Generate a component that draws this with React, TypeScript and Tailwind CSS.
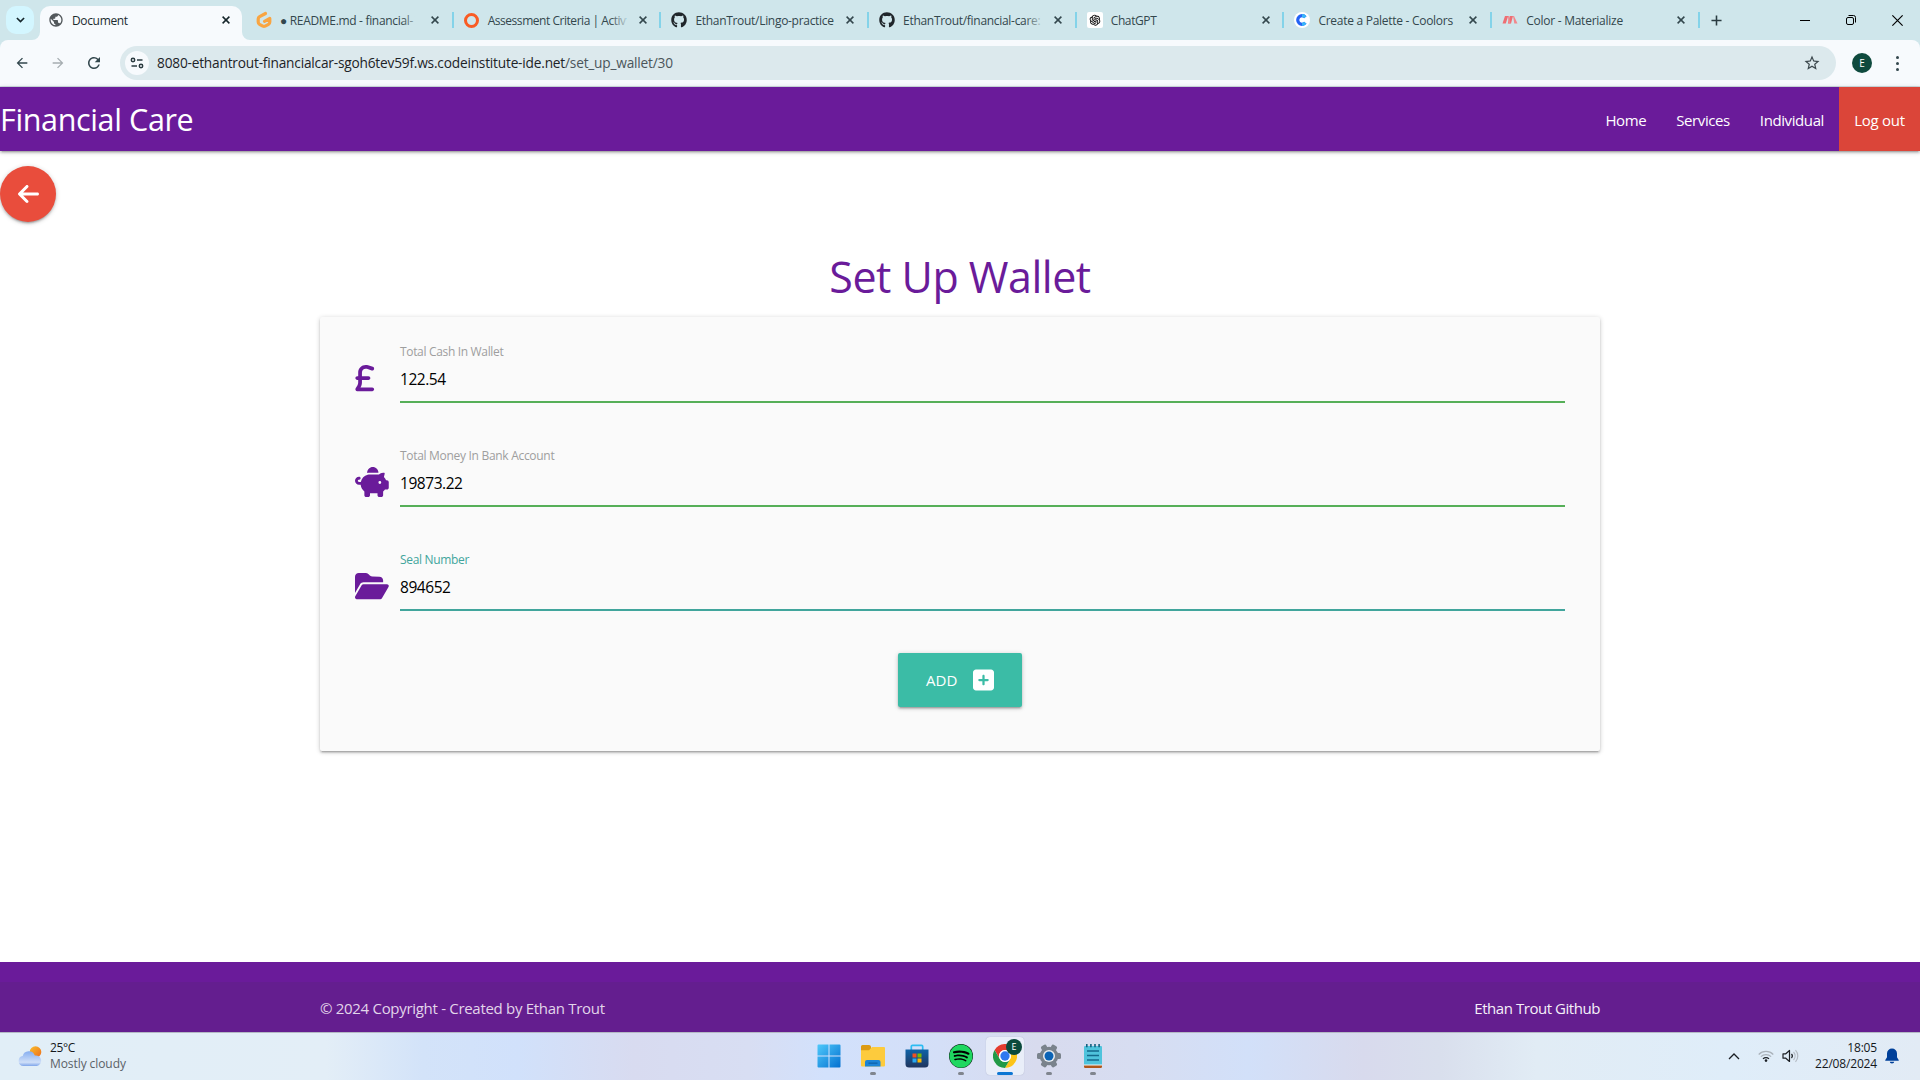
import React from "react";
import {
  FaArrowLeft,
  FaFolderOpen,
  FaGithub,
  FaPiggyBank,
  FaSpotify,
  FaSquarePlus,
  FaSterlingSign,
} from "react-icons/fa6";
import { AiOutlineOpenAI } from "react-icons/ai";
import { MdPublic, MdStarBorder, MdRefresh, MdArrowBack, MdArrowForward } from "react-icons/md";

function CloseGlyph({ className = "text-[#33474d]" }: { className?: string }) {
  return (
    <svg viewBox="0 0 8 8" className={"size-2 shrink-0 " + className}>
      <path d="M.6.6 7.4 7.4M7.4.6.6 7.4" stroke="currentColor" strokeWidth="1.5" fill="none" />
    </svg>
  );
}

function GitpodIcon() {
  return (
    <svg viewBox="0 0 16 18" className="h-[18px] w-4">
      <path
        d="M9.500 2.500 3.600 5.600Q2.200 6.400 2.200 8v3Q2.200 12.600 3.500 13.300L6.800 15.100Q8 15.700 9.200 15.100L12.500 13.300Q13.800 12.600 13.800 11V7.400L8.500 10.300"
        fill="none"
        stroke="#f9a541"
        strokeWidth="3.200"
        strokeLinecap="round"
        strokeLinejoin="round"
      />
    </svg>
  );
}

function CoolorsIcon() {
  return (
    <span className="flex size-4 items-center justify-center rounded-full bg-white">
      <svg viewBox="0 0 16 16" className="size-4">
        <path d="M11.300 5.200A4.300 4.300 0 1 0 11.300 10.800" fill="none" stroke="#2463f5" strokeWidth="3.200" />
        <path d="M8 3.700A4.300 4.300 0 0 1 11.300 5.200M8 12.300A4.300 4.300 0 0 0 11.300 10.800" fill="none" stroke="#37b6f7" strokeWidth="3.200" />
      </svg>
    </span>
  );
}

function MaterializeIcon() {
  return (
    <svg viewBox="0 0 16 10" className="h-[10px] w-4">
      <path d="M3 1h3.200L3.800 8.500H.5zM7.800 1H11L9 8.500H5.800z" fill="#ee6e73" />
      <path d="M6 1h1l1.500 7.500h-2zM11 1h1l3.500 7.500h-3.200z" fill="#f2888c" />
    </svg>
  );
}

const tabs = [
  { title: "● README.md - financial-", icon: <GitpodIcon />, text: "tracking-[-0.32px]", fade: true },
  {
    title: "Assessment Criteria | Activ",
    icon: <span className="size-[15px] rounded-full border-[3.500px] border-[#f95c24]" />,
    text: "tracking-[-0.46px]",
    fade: true,
  },
  { title: "EthanTrout/Lingo-practice", icon: <FaGithub className="size-4 text-[#20262b]" />, text: "tracking-[-0.3px]", fade: false },
  { title: "EthanTrout/financial-care:", icon: <FaGithub className="size-4 text-[#20262b]" />, text: "tracking-[-0.3px]", fade: true },
  {
    title: "ChatGPT",
    icon: (
      <span className="flex size-4 items-center justify-center rounded-[2px] bg-white">
        <AiOutlineOpenAI className="size-[14px] text-black" />
      </span>
    ),
    text: "tracking-[-0.4px]",
    fade: false,
  },
  { title: "Create a Palette - Coolors", icon: <CoolorsIcon />, text: "tracking-[-0.28px]", fade: false },
  { title: "Color - Materialize", icon: <MaterializeIcon />, text: "tracking-[-0.25px]", fade: false },
];

function TabStrip() {
  return (
    <div className="flex h-10 shrink-0 items-end bg-[#cfe6eb] text-[12px] text-[#33474d]">
      <div className="mb-1.5 ml-1.5 flex size-7 shrink-0 items-center justify-center rounded-[10px] bg-[#d3f6ff]">
        <svg viewBox="0 0 10 6" className="h-1.5 w-[9px]">
          <path d="M1 .8 5 4.800 9 .8" fill="none" stroke="#15262b" strokeWidth="1.800" />
        </svg>
      </div>
      <svg viewBox="0 0 8 8" className="ml-[-2px] size-2 shrink-0">
        <path d="M8 0v8H0a8 8 0 0 0 8-8z" fill="#f7fafd" />
      </svg>
      <div className="flex h-[34px] w-[202px] shrink-0 items-center rounded-t-[10px] bg-[#f7fafd] pb-1.5 pl-2 pr-3 text-[#1c2b30]">
        <MdPublic className="size-4 text-[#52585c]" />
        <span className="ml-2 grow pt-px tracking-[-0.35px]">Document</span>
        <CloseGlyph className="text-[#15262b]" />
      </div>
      <svg viewBox="0 0 8 8" className="size-2 shrink-0">
        <path d="M0 0v8h8a8 8 0 0 1-8-8z" fill="#f7fafd" />
      </svg>
      <div className="-ml-1 flex h-10 items-center">
        {tabs.map((t) => (
          <div key={t.title} className="flex h-10 w-[207.700px] items-center pl-[10px]">
            <span className="flex w-4 shrink-0 justify-center">{t.icon}</span>
            <span className="relative ml-2 w-[138px] whitespace-nowrap pt-[2px]">
              <span className={t.text}>{t.title}</span>
              {t.fade && <span className="absolute inset-y-0 right-0 w-4 bg-linear-to-r from-transparent to-[#cfe6eb]/80" />}
            </span>
            <span className="ml-[13px]">
              <CloseGlyph />
            </span>
            <span className="ml-auto h-4 w-[2px] bg-[#84d3e9]" />
          </div>
        ))}
      </div>
      <svg viewBox="0 0 12 12" className="mb-[14.500px] ml-[11px] size-[11px]">
        <path d="M6 .5v11M.5 6h11" stroke="#2a3c42" strokeWidth="1.700" />
      </svg>
      <div className="ml-auto flex h-10 items-center gap-9 pr-[17px]">
        <span className="h-px w-2.5 bg-black" />
        <svg viewBox="0 0 10 10" className="size-2.5" fill="none" stroke="#000">
          <rect x=".5" y="2.500" width="7" height="7" rx="1.500" />
          <path d="M2.500.5h5a2 2 0 0 1 2 2v5" />
        </svg>
        <svg viewBox="0 0 10 10" className="size-[11px]">
          <path d="M.3.300 9.700 9.700M9.700.3.300 9.700" stroke="#000" strokeWidth="1.050" />
        </svg>
      </div>
    </div>
  );
}

function Toolbar() {
  return (
    <div className="flex h-[47px] shrink-0 items-center rounded-t-lg border-b border-[#cfdde0] bg-[#f7fafd] pl-[14px]">
      <MdArrowBack className="size-4 text-[#33474d]" />
      <MdArrowForward className="ml-5 size-4 text-[#a6adb1]" />
      <MdRefresh className="ml-[19px] size-[18px] text-[#33474d]" />
      <div className="ml-[17px] flex h-[34px] w-[1716px] items-center rounded-full bg-[#dce9ed] pl-[5px] pr-[15px]">
        <span className="flex size-6 items-center justify-center rounded-full bg-[#f7fafd]">
          <svg viewBox="0 0 14 12" className="h-3 w-[14px]" fill="none" stroke="#2b3b40" strokeWidth="1.500">
            <circle cx="3" cy="3" r="1.700" />
            <path d="M7 3h5.500M1.500 9H7" />
            <circle cx="11" cy="9" r="1.700" />
          </svg>
        </span>
        <span className="ml-2 grow pt-px text-[13.700px] tracking-[-0.2px] text-[#1d2327]">
          8080-ethantrout-financialcar-sgoh6tev59f.ws.codeinstitute-ide.net<span className="text-[#4b555a]">/set_up_wallet/30</span>
        </span>
        <MdStarBorder className="size-[18px] text-[#3b474c]" />
      </div>
      <span className="ml-4 flex size-5 items-center justify-center rounded-full bg-[#0f4a3e] text-[10px] text-white">E</span>
      <span className="ml-6 flex flex-col gap-[3px]">
        <i className="size-[3px] rounded-full bg-[#33474d]" />
        <i className="size-[3px] rounded-full bg-[#33474d]" />
        <i className="size-[3px] rounded-full bg-[#33474d]" />
      </span>
    </div>
  );
}

const depth = "shadow-[0_2px_2px_0_rgba(0,0,0,0.14),0_3px_1px_-2px_rgba(0,0,0,0.12),0_1px_5px_0_rgba(0,0,0,0.2)]";

function NavBar() {
  return (
    <nav className={"flex h-16 shrink-0 items-center bg-[#6a1b9a] text-white " + depth}>
      <span className="grow pt-px text-[30.500px] tracking-[-0.36px]">Financial Care</span>
      <span className="px-[15px] pt-0.5 text-[15px] tracking-[-0.4px]">Home</span>
      <span className="px-[15px] pt-0.5 text-[15px] tracking-[-0.4px]">Services</span>
      <span className="px-[15px] pt-0.5 text-[15px] tracking-[-0.4px]">Individual</span>
      <span className="flex h-16 w-[81px] items-center justify-center bg-[#db4539] pt-0.5 text-[15px] tracking-[-0.3px]">Log out</span>
    </nav>
  );
}

interface FieldProps {
  icon: React.ReactNode;
  label: string;
  value: string;
  labelClass: string;
  lineClass: string;
}

function Field({ icon, label, value, labelClass, lineClass }: FieldProps) {
  return (
    <div className="flex h-[104px]">
      <div className="flex w-[45px] pt-5 text-[#6a1b9a]">{icon}</div>
      <div className={"flex h-[60px] grow flex-col border-b-2 " + lineClass}>
        <span className={"h-[18px] text-[12px] leading-[18px] " + labelClass}>{label}</span>
        <span className="mt-1.5 h-6 text-[15.500px] leading-6 tracking-[-0.45px] text-black">{value}</span>
      </div>
    </div>
  );
}

function WalletForm() {
  return (
    <div className={"mx-auto h-[434px] w-[1280px] rounded-[2px] bg-[#fafafa] pl-[35px] pr-[35px] pt-[26px] " + depth}>
      <Field
        icon={<FaSterlingSign className="h-[30px] w-[19.500px]" />}
        label="Total Cash In Wallet"
        value="122.54"
        labelClass="text-[#9e9e9e] tracking-[-0.33px]"
        lineClass="border-[#56af58]"
      />
      <Field
        icon={<FaPiggyBank className="h-[30px] w-[33.750px]" />}
        label="Total Money In Bank Account"
        value="19873.22"
        labelClass="text-[#9e9e9e] tracking-[-0.3px]"
        lineClass="border-[#56af58]"
      />
      <Field
        icon={<FaFolderOpen className="h-[30px] w-[33.750px]" />}
        label="Seal Number"
        value="894652"
        labelClass="text-[#41a59c] tracking-[-0.33px]"
        lineClass="border-[#41a59c]"
      />
      <div className={"mx-auto -mt-0.5 flex h-[54px] w-[124px] items-center rounded-[2px] bg-[#3bbca6] pl-7 text-white " + depth}>
        <span className="w-[47px] pt-px text-[15px] tracking-[0.1px]">ADD</span>
        <FaSquarePlus className="h-6 w-[21px]" />
      </div>
    </div>
  );
}

function Footer() {
  return (
    <footer className="h-[70px] shrink-0 bg-[#6a1b9a] pt-5">
      <div className="h-[50px] bg-[#641e8f]">
        <div className="mx-auto flex w-[1280px] justify-between pt-[13px] text-[15px] leading-[26px]">
          <span className="tracking-[-0.3px] text-[#e2d5ea]">© 2024 Copyright - Created by Ethan Trout</span>
          <span className="tracking-[-0.45px] text-[#f5f0f8]">Ethan Trout Github</span>
        </div>
      </div>
    </footer>
  );
}

function WeatherIcon() {
  return (
    <svg viewBox="0 0 24 20" className="h-5 w-6">
      <defs>
        <linearGradient id="sun" x1="0" y1="0" x2="1" y2="1">
          <stop offset="0" stopColor="#f9bf2c" />
          <stop offset="1" stopColor="#ee6b1b" />
        </linearGradient>
        <linearGradient id="cloud" x1="0" y1="0" x2="0" y2="1">
          <stop offset="0" stopColor="#86aef0" />
          <stop offset=".75" stopColor="#cfdff8" />
          <stop offset="1" stopColor="#7fa5ea" />
        </linearGradient>
      </defs>
      <circle cx="17.500" cy="6" r="5.800" fill="url(#sun)" />
      <path d="M5.500 20a5 5 0 0 1-.8-9.900A6.300 6.300 0 0 1 16.800 9.500a5.300 5.300 0 0 1 2 10.500z" fill="url(#cloud)" />
    </svg>
  );
}

function StartIcon() {
  return (
    <svg viewBox="0 0 24 24" className="size-6">
      <defs>
        <linearGradient id="win" x1="0" y1="0" x2="1" y2="1">
          <stop offset="0" stopColor="#4fc9fb" />
          <stop offset="1" stopColor="#0470d0" />
        </linearGradient>
      </defs>
      <path d="M1.500.5H11.500V11.500H.5V1.500a1 1 0 0 1 1-1zM12.500.5h10a1 1 0 0 1 1 1v10h-11zM.5 12.500h11v11h-10a1 1 0 0 1-1-1zM12.500 12.500h11v10a1 1 0 0 1-1 1h-10z" fill="url(#win)" />
    </svg>
  );
}

function ExplorerIcon() {
  return (
    <svg viewBox="0 0 24 24" className="size-6">
      <path d="M0 2.500A1.500 1.500 0 0 1 1.500 1H8a2 2 0 0 1 2 1.800V8H0z" fill="#dc9a13" />
      <path d="M0 6.200h8L11 3h12a1 1 0 0 1 1 1v17.500a1 1 0 0 1-1 1H1a1 1 0 0 1-1-1z" fill="#fdcb3d" />
      <path d="M4 22.500V18a2 2 0 0 1 2-2h11.500a2 2 0 0 1 2 2v4.500z" fill="#1c84d6" />
      <path d="M7.500 18.500h9v1.300h-9z" fill="#0f62aa" />
    </svg>
  );
}

function StoreIcon() {
  return (
    <svg viewBox="0 0 24 24" className="size-6">
      <defs>
        <linearGradient id="bag" x1="0" y1="0" x2="0" y2="1">
          <stop offset="0" stopColor="#0f63a8" />
          <stop offset="1" stopColor="#20355e" />
        </linearGradient>
      </defs>
      <path d="M6.300 6V2.500a1.200 1.200 0 0 1 1.200-1.200h9a1.200 1.200 0 0 1 1.200 1.200V6" fill="none" stroke="#2dbcf2" strokeWidth="1.700" />
      <path d="M.5 5.500h23V20a3.500 3.500 0 0 1-3.500 3.500H4A3.500 3.500 0 0 1 .5 20z" fill="url(#bag)" />
      <path d="M7.500 9.500h4v4h-4z" fill="#f25022" />
      <path d="M12.500 9.500h4v4h-4z" fill="#7fba00" />
      <path d="M7.500 14.500h4v4h-4z" fill="#29a8ef" />
      <path d="M12.500 14.500h4v4h-4z" fill="#ffb900" />
    </svg>
  );
}

function ChromeIcon() {
  return (
    <svg viewBox="0 0 48 48" className="size-6">
      <circle cx="24" cy="24" r="24" fill="#fff" />
      <path d="M3.200 12A24 24 0 0 1 44.800 12H24a12 12 0 0 0-10.400 18z" fill="#e33b2e" />
      <path d="M44.800 12A24 24 0 0 1 24 48l10.400-18A12 12 0 0 0 24 12z" fill="#fcc419" />
      <path d="M24 48A24 24 0 0 1 3.200 12l10.400 18A12 12 0 0 0 34.400 30z" fill="#229a47" />
      <circle cx="24" cy="24" r="12" fill="#fff" />
      <circle cx="24" cy="24" r="9.300" fill="#2f79f0" />
    </svg>
  );
}

function SettingsIcon() {
  return (
    <svg viewBox="0 0 24 24" className="size-6">
      <g fill="#7a838c">
        <circle cx="12" cy="12" r="9.300" />
        {[0, 60, 120].map((a) => (
          <rect key={a} x="9" y="0" width="6" height="24" rx="1.500" transform={`rotate(${a + 30} 12 12)`} />
        ))}
      </g>
      <circle cx="12" cy="12" r="6" fill="#e9edf1" />
      <circle cx="12" cy="12" r="4.500" fill="#0b63b5" />
    </svg>
  );
}

function NotepadIcon() {
  return (
    <svg viewBox="0 0 24 24" className="size-6">
      <path d="M3 21h18v1.700a1.300 1.300 0 0 1-1.300 1.300H4.300A1.300 1.300 0 0 1 3 22.700z" fill="#b0571b" />
      <path d="M3 20h18v1.500H3z" fill="#f4f4f4" />
      <path d="M3 3a1 1 0 0 1 1-1h16a1 1 0 0 1 1 1v17.500H3z" fill="#4fc3dc" />
      <path d="M6 7h12M6 11.500h12M6 16h12" stroke="#146a8c" strokeWidth="1.500" />
      <path d="M5.800 0v3.200M9.900 0v3.200M14 0v3.200M18.100 0v3.200" stroke="#14607f" strokeWidth="1.600" />
    </svg>
  );
}

const apps = [
  { name: "start", icon: <StartIcon />, open: false },
  { name: "explorer", icon: <ExplorerIcon />, open: true },
  { name: "store", icon: <StoreIcon />, open: false },
  {
    name: "spotify",
    icon: (
      <span className="flex size-6 rounded-full bg-black">
        <FaSpotify className="size-6 text-[#1fd760]" />
      </span>
    ),
    open: true,
  },
  { name: "chrome", icon: <ChromeIcon />, open: true },
  { name: "settings", icon: <SettingsIcon />, open: true },
  { name: "notepad", icon: <NotepadIcon />, open: true },
];

function Taskbar() {
  return (
    <div className="grid h-12 shrink-0 grid-cols-[1fr_308px_1fr] border-t border-[#b3b9c4] bg-[linear-gradient(90deg,#e1eef7_0%,#e3eef7_17%,#d3e3f9_22%,#d1e1fb_27%,#d8dbf0_33%,#d8def3_39%,#d2e1fc_43%,#d4dff7_49%,#d8dbee_54%,#d7ddf1_59%,#d2e0f9_65%,#d8daed_71%,#d9dfed_75%,#e1ecf5_80%,#dfedf9_90%,#e2ebf5_100%)]">
      <div className="flex items-center pb-px pl-[18px] text-[12px] leading-4">
        <WeatherIcon />
        <div className="ml-2 tracking-[-0.08px]">
          <div className="tracking-[-0.4px] text-[#14181c]">25°C</div>
          <div className="text-[#5b6167]">Mostly cloudy</div>
        </div>
      </div>
      <div className="flex translate-x-px">
        {apps.map((a) => (
          <div key={a.name} className="flex w-11 justify-center pt-1">
            <div
              className={
                "relative flex h-[38px] w-[38px] flex-col items-center rounded pt-[7px] " +
                (a.name === "chrome" ? "bg-[#e9eef9] shadow-[0_0_1px_rgba(60,70,100,0.35)]" : "")
              }
            >
              {a.icon}
              {a.name === "chrome" && (
                <span className="absolute left-5 top-[2px] flex size-4 items-center justify-center rounded-full bg-[#0a4a3c] text-[9px] text-white">E</span>
              )}
              {a.open && (
                <span className={"absolute bottom-0 h-[3px] rounded-full " + (a.name === "chrome" ? "w-4 bg-[#0d76d3]" : "w-1.5 bg-[#80858e]")} />
              )}
            </div>
          </div>
        ))}
      </div>
      <div className="flex items-center justify-end pb-px pr-[21px]">
        <svg viewBox="0 0 12 7" className="h-[7px] w-3">
          <path d="M1 6 6 1l5 5" fill="none" stroke="#1b1f24" strokeWidth="1.300" />
        </svg>
        <svg viewBox="0 0 16 12" className="ml-[18px] h-3 w-4" fill="none" strokeWidth="1.200">
          <path d="M.7 4.500a10.300 10.300 0 0 1 14.600 0M2.900 6.700a7.200 7.200 0 0 1 10.200 0" stroke="#aab2ba" />
          <path d="M5 8.800a4.200 4.200 0 0 1 6 0" stroke="#1b1f24" />
          <circle cx="8" cy="10.600" r="1.300" fill="#1b1f24" />
        </svg>
        <svg viewBox="0 0 17 14" className="ml-2 h-3.5 w-[17px]" fill="none" strokeWidth="1.200">
          <path d="M1 4.800h2.800L7.500 1.500v11L3.800 9.200H1z" stroke="#1b1f24" strokeLinejoin="round" />
          <path d="M9.500 5a3 3 0 0 1 0 4" stroke="#1b1f24" />
          <path d="M11.500 3a6 6 0 0 1 0 8M13.500 1.200a8.500 8.500 0 0 1 0 11.600" stroke="#b4bbc3" />
        </svg>
        <div className="ml-4 text-right text-[12px] leading-4 tracking-[-0.17px] text-[#14181c]">
          <div>18:05</div>
          <div>22/08/2024</div>
        </div>
        <svg viewBox="0 0 14 16" className="ml-2 h-4 w-3.5">
          <path d="M7 .5a5 5 0 0 1 5 5v3.800l1.700 2.700a.5.500 0 0 1-.4.800H.7a.5.500 0 0 1-.4-.8L2 9.300V5.500a5 5 0 0 1 5-5zM4.800 13.700h4.400a2.200 1.800 0 0 1-4.400 0z" fill="#00409a" />
        </svg>
      </div>
    </div>
  );
}

export default function App() {
  return (
    <div className="flex h-[1080px] w-[1920px] flex-col overflow-hidden bg-white font-['Open_Sans','Noto_Sans',sans-serif]">
      <div className="shrink-0 bg-[#cfe6eb]">
        <TabStrip />
        <Toolbar />
      </div>
      <NavBar />
      <main className="grow">
        <div className={"mt-[15px] flex size-14 items-center justify-center rounded-full bg-[#e94d3c] text-white " + depth}>
          <FaArrowLeft className="h-6 w-[21px]" />
        </div>
        <h1 className="mt-7 h-[67px] text-center text-[43px] leading-[54px] tracking-[-0.5px] text-[#6a1b9a]">Set Up Wallet</h1>
        <WalletForm />
      </main>
      <Footer />
      <Taskbar />
    </div>
  );
}
